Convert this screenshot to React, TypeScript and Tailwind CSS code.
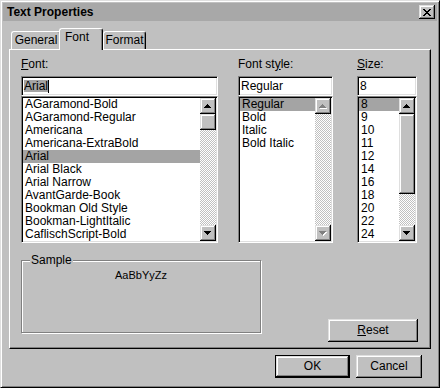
import React from "react";

const raised =
  "shadow-[inset_-1px_-1px_0_#000,inset_1px_1px_0_#dfdfdf,inset_-2px_-2px_0_#808080,inset_2px_2px_0_#fff]";
const sunken =
  "border border-t-[#808080] border-l-[#808080] border-r-white border-b-white shadow-[inset_1px_1px_0_#000,inset_-1px_-1px_0_#dfdfdf]";

const fontList = [
  "AGaramond-Bold",
  "AGaramond-Regular",
  "Americana",
  "Americana-ExtraBold",
  "Arial",
  "Arial Black",
  "Arial Narrow",
  "AvantGarde-Book",
  "Bookman Old Style",
  "Bookman-LightItalic",
  "CaflischScript-Bold",
];
const styleList = ["Regular", "Bold", "Italic", "Bold Italic"];
const sizeList = ["8", "9", "10", "11", "12", "14", "16", "18", "20", "22", "24"];

const upRows = [[3, 1], [2, 3], [1, 5], [0, 7]];

const Arrow = ({ down, off }: { down?: boolean; off?: boolean }) => {
  const rows = down ? [...upRows].reverse() : upRows;
  return (
    <svg width="8" height="5" viewBox="0 0 8 5" shapeRendering="crispEdges">
      {off &&
        rows.map(([x, w], i) => (
          <rect key={"s" + i} x={x + 1} y={i + 1} width={w} height={1} fill="#fff" />
        ))}
      {rows.map(([x, w], i) => (
        <rect key={i} x={x} y={i} width={w} height={1} fill={off ? "#808080" : "#000"} />
      ))}
    </svg>
  );
};

const ScrollButton = ({ down, off }: { down?: boolean; off?: boolean }) => (
  <div className={`h-[16px] w-[16px] bg-[#c0c0c0] flex items-center justify-center ${raised}`}>
    <Arrow down={down} off={off} />
  </div>
);

const ScrollBar = ({ thumb, off }: { thumb?: number; off?: boolean }) => (
  <div className="w-[16px] flex flex-col">
    <ScrollButton off={off} />
    <div className="flex-1 flex flex-col bg-[repeating-conic-gradient(#c0c0c0_0%_25%,#fff_0%_50%)] bg-[length:2px_2px]">
      {thumb ? (
        <div className={`w-[16px] bg-[#c0c0c0] ${raised}`} style={{ height: thumb }} />
      ) : null}
    </div>
    <ScrollButton down off={off} />
  </div>
);

const ListBox = ({
  items,
  selected,
  thumb,
  off,
}: {
  items: string[];
  selected: number;
  thumb?: number;
  off?: boolean;
}) => (
  <div className={`h-[147px] p-[1px] flex bg-white ${sunken}`}>
    <div className="flex-1 overflow-hidden">
      {items.map((it, i) => (
        <div
          key={it}
          className={`h-[13px] leading-[13px] pl-[2px] whitespace-nowrap ${
            i === selected ? "bg-[#a4a4a4]" : ""
          }`}
        >
          {it}
        </div>
      ))}
    </div>
    <ScrollBar thumb={thumb} off={off} />
  </div>
);

const TextBox = ({ children }: { children: React.ReactNode }) => (
  <div className={`h-[20px] bg-white pl-[2px] pt-[3px] flex items-start ${sunken}`}>
    {children}
  </div>
);

const Tab = ({ label, active, w }: { label: string; active?: boolean; w: string }) => (
  <div
    className={`${w} ${
      active ? "h-[22px] -mb-[1px] -ml-[2px] z-10 pl-[5px] justify-start" : "h-[18px] justify-center"
    } relative flex bg-[#c0c0c0] border-l border-t border-r border-white border-r-black rounded-t-[3px] shadow-[inset_-1px_0_0_#808080] pt-[2px] leading-[13px]`}
  >
    {label}
  </div>
);

const Button = ({ children, w, def }: { children: React.ReactNode; w: string; def?: boolean }) => (
  <div className={`${w} ${def ? "border border-black" : ""} h-[23px]`}>
    <div className={`w-full h-full bg-[#c0c0c0] flex items-center justify-center leading-[13px] ${raised}`}>
      {children}
    </div>
  </div>
);

const CloseIcon = () => {
  const rows = [
    [0, 2, 6, 2],
    [1, 2, 5, 2],
    [2, 4],
    [3, 2],
    [2, 4],
    [1, 2, 5, 2],
    [0, 2, 6, 2],
  ];
  return (
    <svg width="8" height="7" viewBox="0 0 8 7" shapeRendering="crispEdges">
      {rows.map((r, i) => (
        <g key={i}>
          <rect x={r[0]} y={i} width={r[1]} height={1} fill="#000" />
          {r.length > 2 && <rect x={r[2]} y={i} width={r[3]} height={1} fill="#000" />}
        </g>
      ))}
    </svg>
  );
};

export default function App() {
  return (
    <div className="w-[440px] h-[388px] bg-[#c0c0c0] border border-t-[#dfdfdf] border-l-[#dfdfdf] border-r-black border-b-black shadow-[inset_1px_1px_0_#fff,inset_-1px_-1px_0_#808080] p-[2px] text-[12px] text-black font-['Liberation_Sans_Narrow','Arial_Narrow','Liberation_Sans',sans-serif]">
      {/* title bar */}
      <div className="h-[18px] bg-[#a8a8a8] flex items-center justify-between">
        <span className="pl-[4px] font-['Liberation_Sans',sans-serif] font-bold text-[12px] leading-[18px]">
          Text Properties
        </span>
        <div className={`w-[16px] h-[14px] mr-[2px] bg-[#c0c0c0] flex items-center justify-center ${raised}`}>
          <CloseIcon />
        </div>
      </div>

      {/* tabs */}
      <div className="mt-[7px] ml-[6px] pl-[2px] h-[21px] flex items-end">
        <Tab label="General" w="w-[50px]" />
        <Tab label="Font" w="w-[44px]" active />
        <Tab label="Format" w="w-[43px]" />
      </div>

      {/* panel */}
      <div className="ml-[6px] w-[422px] h-[300px] border-l border-t border-white border-r border-b border-r-black border-b-black shadow-[inset_-1px_-1px_0_#808080]">
        <div className="flex pl-[11px] pt-[8px]">
          <div className="w-[197px]">
            <div className="h-[13px] leading-[13px] mb-[5px]">
              <u>F</u>ont:
            </div>
            <TextBox>
              <span className="h-[12px] leading-[12px] bg-[#a4a4a4]">Arial</span>
              <span className="w-[1px] h-[13px] bg-black" />
            </TextBox>
            <ListBox items={fontList} selected={4} thumb={16} />
          </div>
          <div className="w-[95px] ml-[20px]">
            <div className="h-[13px] leading-[13px] mb-[5px]">
              Font st<u>y</u>le:
            </div>
            <TextBox>
              <span className="leading-[12px]">Regular</span>
            </TextBox>
            <ListBox items={styleList} selected={0} off />
          </div>
          <div className="w-[60px] ml-[24px]">
            <div className="h-[13px] leading-[13px] mb-[5px]">
              <u>S</u>ize:
            </div>
            <TextBox>
              <span className="leading-[12px]">8</span>
            </TextBox>
            <ListBox items={sizeList} selected={0} thumb={80} />
          </div>
        </div>

        <div className="flex pl-[11px] mt-[17px]">
          <div className="relative w-[240px] h-[73px] border border-[#808080] shadow-[inset_1px_1px_0_#fff,1px_1px_0_#fff]">
            <span className="absolute -top-[7px] left-[8px] px-[1px] bg-[#c0c0c0] leading-[13px]">
              Sample
            </span>
            <div className="pt-[8px] text-center font-['Liberation_Sans',sans-serif] text-[11px] leading-[13px]">
              AaBbYyZz
            </div>
          </div>
          <div className="ml-[67px] mt-[59px]">
            <Button w="w-[90px]">
              <span>
                <u>R</u>eset
              </span>
            </Button>
          </div>
        </div>
      </div>

      {/* dialog buttons */}
      <div className="mt-[6px] flex justify-end pr-[15px] gap-[6px]">
        <Button w="w-[75px]" def>
          OK
        </Button>
        <Button w="w-[66px]">Cancel</Button>
      </div>
    </div>
  );
}
